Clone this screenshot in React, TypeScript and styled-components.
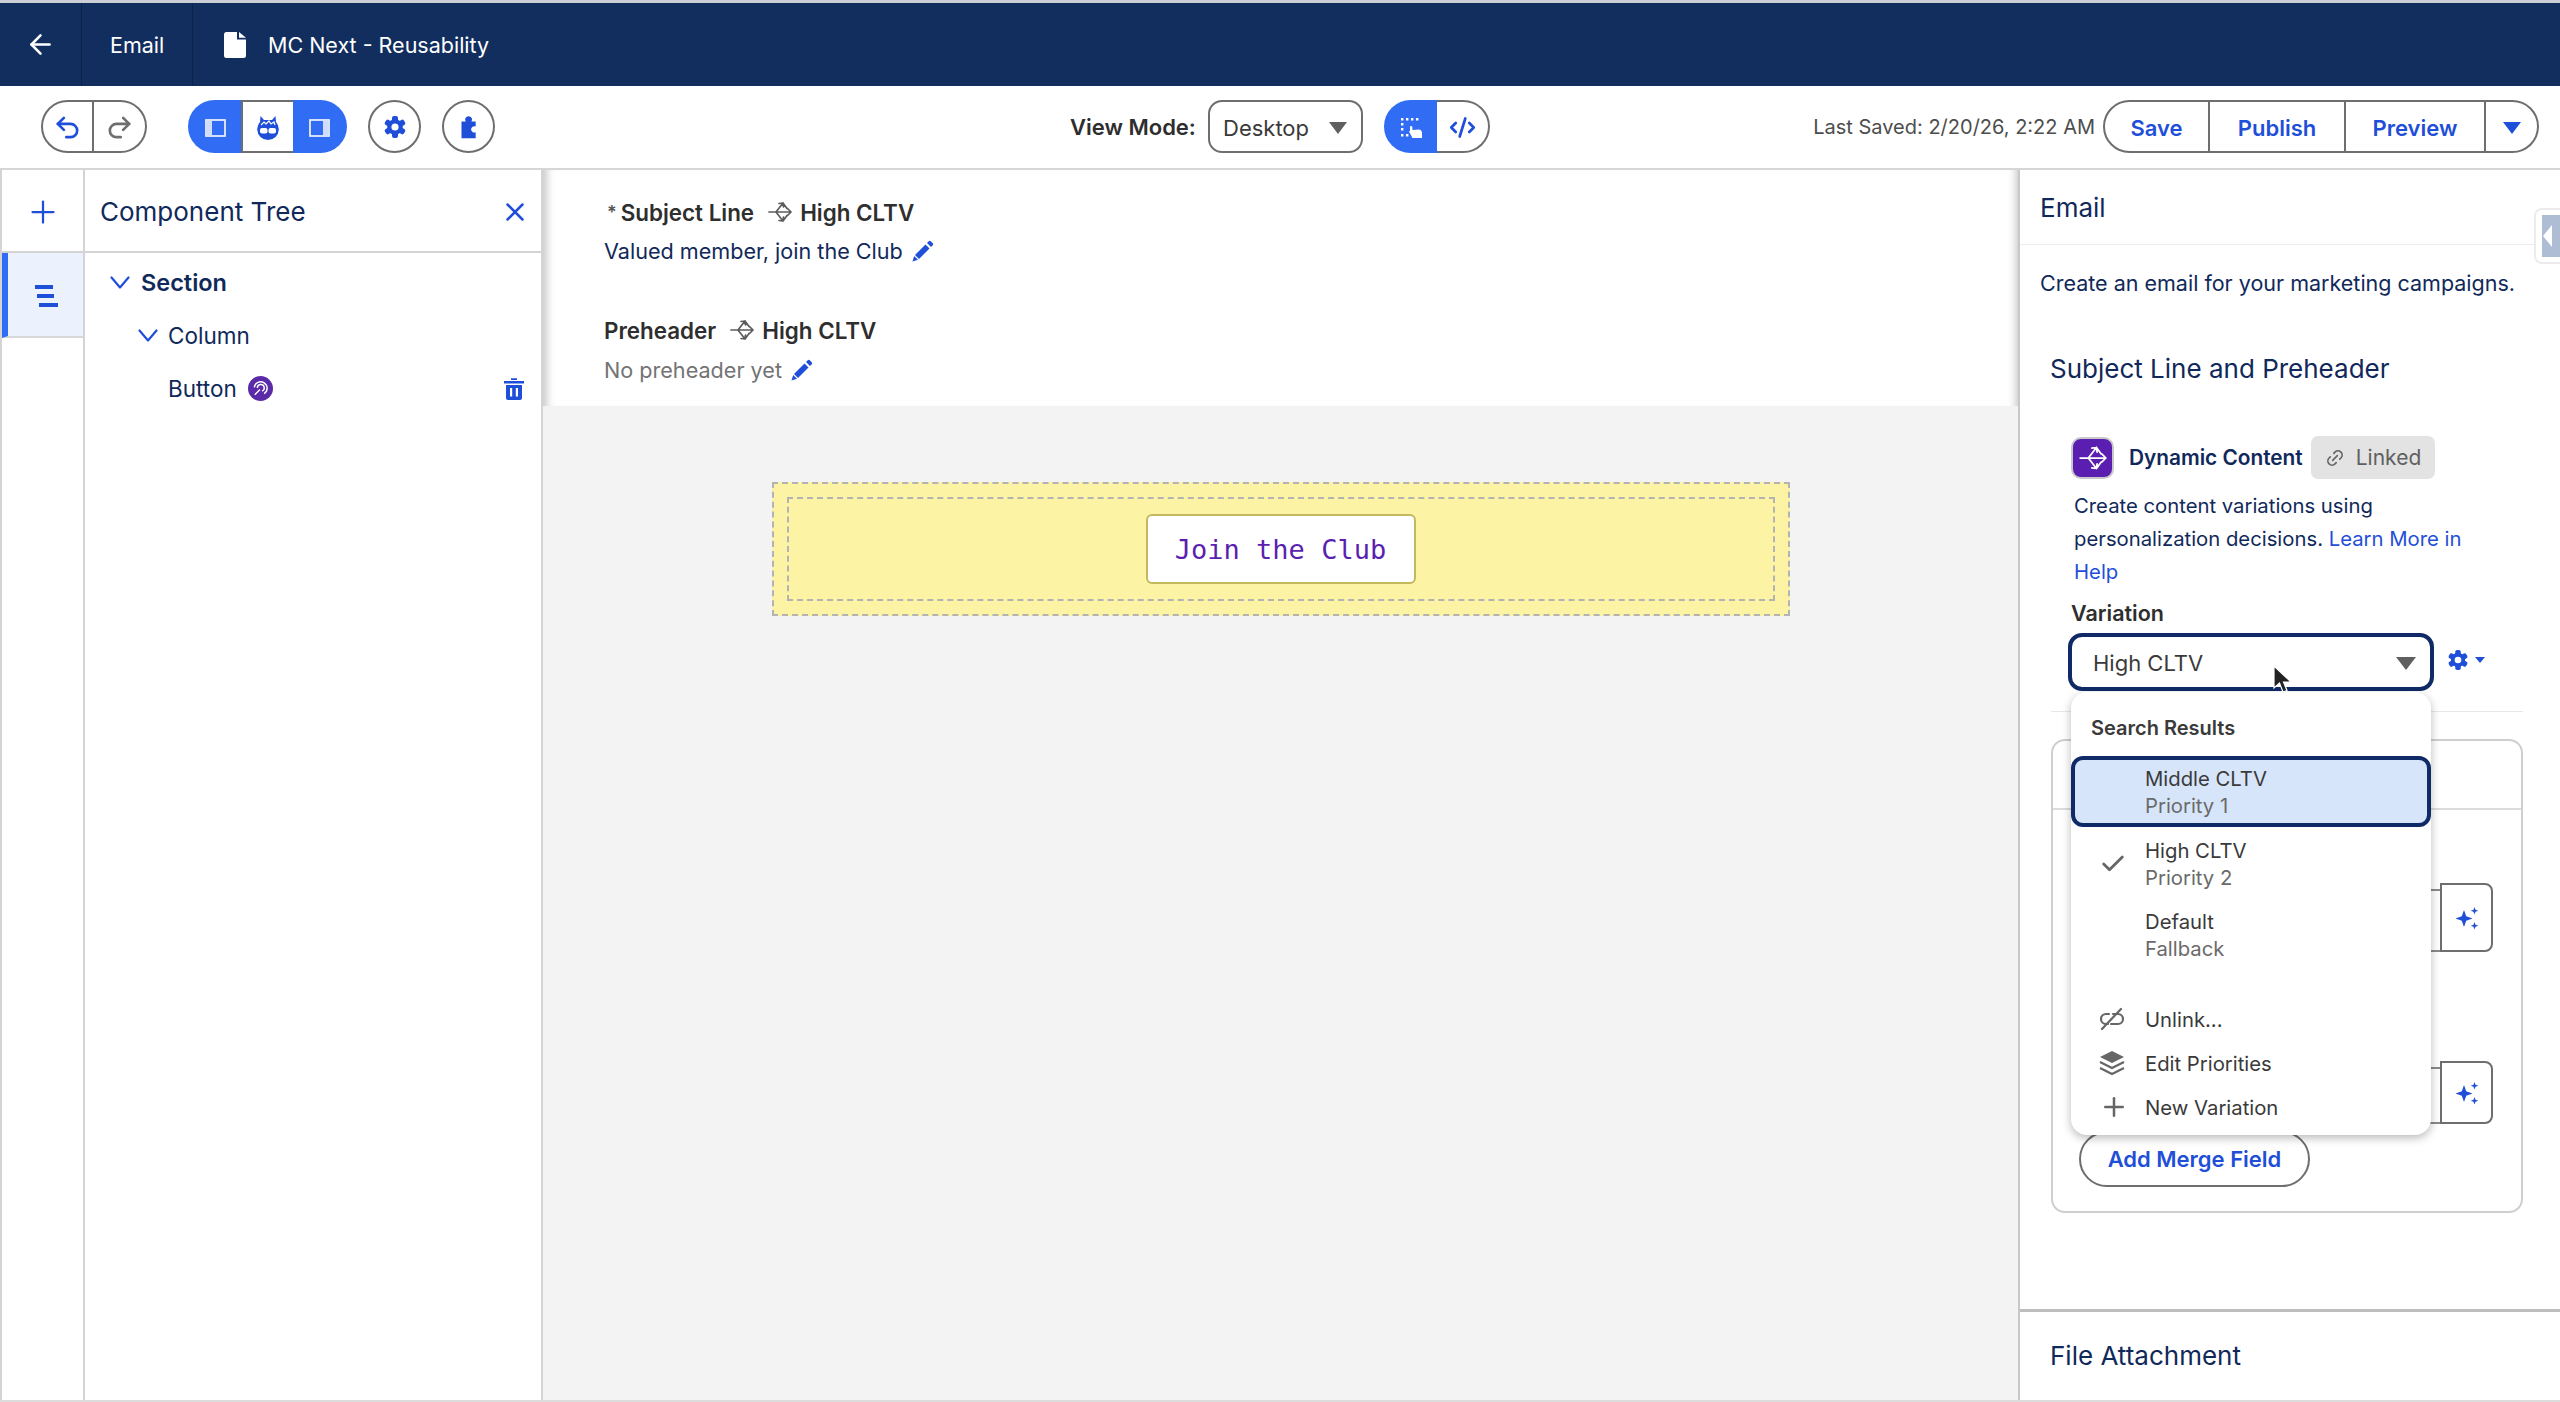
import React from "react";
import styled, { createGlobalStyle } from "styled-components";
import { ArrowLeft, Check, CodeXml, Link2, Plus, Redo2, Undo2, X } from "lucide-react";

const NAVY = "#112e5e";
const INK = "#10295a";
const BLUE = "#1f4fd8";
const FILL = "#316cf4";
const GRAY = "#6e6e6e";
const TEXT = "#2e2e2e";

const Global = createGlobalStyle`
  html, body { margin: 0; padding: 0; background: #fff; }
  body { font-family: Inter, "Noto Sans", "Liberation Sans", sans-serif; color: ${TEXT}; }
  * { box-sizing: border-box; }
`;

const Page = styled.div`
  width: 2560px; height: 1402px; overflow: hidden; display: flex; flex-direction: column;
  background: #fff; border-bottom: 2px solid #dcdcdc;
`;
const TopBar = styled.header`
  height: 86px; flex: none; display: flex; background: ${NAVY}; color: #fff;
  border-top: 3px solid #ccd0d6; font-size: 21.500px;
`;
const TopCell = styled.div<{ $w: number; $pad?: number }>`
  width: ${p => p.$w}px; display: flex; align-items: center; padding-left: ${p => p.$pad ?? 0}px;
  border-right: 1px solid #0b2349;
`;
const TopTitle = styled.div`
  display: flex; align-items: center; gap: 22px; padding-left: 31px;
`;
const Toolbar = styled.div`
  height: 84px; flex: none; display: grid; grid-template-columns: 1029px 420px 1fr;
  padding: 14px 21px 0 41px; border-bottom: 2px solid #d6d6d6;
`;
const Cluster = styled.div<{ $gap: number }>`
  display: flex; align-items: flex-start; gap: ${p => p.$gap}px;
`;
const Seg = styled.button<{ $w: number; $on?: boolean; $first?: boolean; $last?: boolean; $mid?: boolean }>`
  width: ${p => p.$w}px; height: 53px; padding: 2px 0 0; display: flex; align-items: center; justify-content: center;
  font: 600 22px Inter, sans-serif; color: ${BLUE};
  background: ${p => (p.$on ? FILL : "#fff")};
  border: 2px solid ${p => (p.$on ? FILL : GRAY)};
  border-left-width: ${p => (p.$first || p.$mid ? 2 : 0)}px;
  border-right-width: ${p => (p.$mid ? 0 : p.$last || !p.$on ? 2 : 0)}px;
  border-radius: ${p => (p.$first ? 27 : 0)}px ${p => (p.$last ? 27 : 0)}px ${p => (p.$last ? 27 : 0)}px ${p => (p.$first ? 27 : 0)}px;
`;
const Group = styled.div<{ $after?: number }>`
  display: flex; margin-right: ${p => p.$after ?? 0}px;
`;
const CircleButton = styled.button`
  width: 53px; height: 53px; padding: 0; border-radius: 50%; border: 2px solid ${GRAY}; background: #fff;
  display: flex; align-items: center; justify-content: center;
`;
const ViewLabel = styled.span`
  flex: none; width: 138px; white-space: nowrap; font-weight: 600; font-size: 22px; line-height: 55px; color: ${TEXT};
`;
const ViewSelect = styled.div`
  flex: none; width: 155px; height: 53px; border: 2px solid ${GRAY}; border-radius: 14px; display: flex; align-items: center;
  justify-content: space-between; padding: 2px 14px 0 13px; font-size: 22px; color: #3a3a3a; margin-right: 21px;
`;
const Caret = styled.i<{ $c?: string; $w?: number }>`
  display: block; width: 0; height: 0; flex: none;
  border-left: ${p => (p.$w ?? 18) / 2}px solid transparent;
  border-right: ${p => (p.$w ?? 18) / 2}px solid transparent;
  border-top: ${p => ((p.$w ?? 18) * 2) / 3}px solid ${p => p.$c ?? "#5f5f5f"};
`;
const RightTools = styled.div`
  justify-self: end; display: flex; align-items: flex-start;
`;
const Saved = styled.span`
  font-size: 20px; line-height: 55px; color: #4d4d4d; margin-right: 8px; white-space: nowrap;
`;
const Main = styled.main`
  flex: 1; min-height: 0; display: flex;
`;
const Rail = styled.nav`
  width: 85px; flex: none; border-left: 2px solid #d4d4d4; border-right: 2px solid #d4d4d4;
`;
const RailTop = styled.div`
  height: 83px; display: flex; align-items: center; justify-content: center; border-bottom: 2px solid #d4d4d4;
  padding-top: 2px;
`;
const RailItem = styled.div`
  height: 85px; background: #ecf2fd; border-left: 6px solid ${FILL}; border-bottom: 2px solid #d8d8d8;
  display: flex; align-items: center; justify-content: center; padding-top: 2px;
`;
const Tree = styled.aside`
  width: 458px; flex: none; border-right: 2px solid #d4d4d4;
`;
const TreeHead = styled.div`
  height: 83px; display: flex; align-items: center; justify-content: space-between; padding: 2px 11px 0 15px;
  border-bottom: 2px solid #d4d4d4; font-size: 26px; color: ${INK};
`;
const TreeRows = styled.div`
  padding-top: 3px;
`;
const TreeRow = styled.div<{ $in: number; $head?: boolean; $gap?: number }>`
  height: 53px; display: flex; align-items: center; padding: 0 17px 0 ${p => p.$in}px; gap: ${p => p.$gap ?? 11}px;
  font-size: ${p => (p.$head ? 23.500 : 22.500)}px; font-weight: ${p => (p.$head ? 600 : 400)}; color: ${INK};
`;
const Trash = styled.span`
  margin-left: auto; display: flex;
`;
const Center = styled.section`
  flex: 1; min-width: 0; background: #f3f3f3; display: flex; flex-direction: column; align-items: center;
`;
const Subject = styled.div`
  align-self: stretch; height: 236px; background: #fff; padding: 26px 0 0 61px;
  box-shadow: inset 12px 0 8px -8px #c9c9c9, inset -10px 0 8px -8px #c4c4c4;
`;
const FieldHead = styled.div<{ $gapTop?: number }>`
  display: flex; align-items: center; height: 32px; font-weight: 600; font-size: 22.400px; color: ${TEXT};
  margin-top: ${p => p.$gapTop ?? 0}px;
`;
const BranchSlot = styled.span`
  display: flex; margin: 0 8px 0 14px;
`;
const Star = styled.span`
  font-size: 18px; color: #555; margin: 0 4px 0 3px;
`;
const FieldValue = styled.div<{ $muted?: boolean; $top: number }>`
  display: flex; align-items: center; gap: 8px; height: 30px; margin-top: ${p => p.$top}px; font-size: 21.600px;
  color: ${p => (p.$muted ? "#737373" : INK)};
`;
const Section = styled.div`
  width: 1018px; height: 134px; margin-top: 76px; background: #fdf3a5; border: 2px dashed #b3b3b3; padding: 13px;
`;
const Column = styled.div`
  height: 104px; border: 2px dashed #b3b3b3; display: flex; align-items: center; justify-content: center;
`;
const CanvasButton = styled.div`
  width: 270px; height: 70px; background: #fff; border: 2px solid #c2b95e; border-radius: 6px; display: flex;
  align-items: center; justify-content: center; font: 27px "DejaVu Sans Mono", monospace; color: #5a1fb0;
`;
const Inspector = styled.aside`
  position: relative; width: 542px; flex: none; border-left: 2px solid #c8c8c8; overflow: hidden;
`;
const InspectorHead = styled.div`
  height: 75px; display: flex; align-items: center; padding-left: 20px; border-bottom: 1px solid #ececec;
  font-size: 26px; color: ${INK};
`;
const Collapse = styled.div`
  position: absolute; right: 0; top: 38px; width: 26px; height: 56px; background: #fff; border: 2px solid #ececec;
  border-right: 0; border-radius: 8px 0 0 8px; padding: 5px 0 5px 6px; display: flex;
`;
const CollapseInner = styled.div`
  flex: 1; background: #aebcd4; display: flex; align-items: center;
`;
const Lead = styled.p`
  margin: 23px 0 0 20px; font-size: 21.500px; line-height: 30px; color: ${INK}; white-space: nowrap;
`;
const Heading = styled.h2<{ $top: number }>`
  margin: ${p => p.$top}px 0 0 30px; font-weight: 400; font-size: 26px; line-height: 32px; color: ${INK};
`;
const DynRow = styled.div`
  margin: 51px 0 0 51px; display: flex; align-items: center; height: 43px;
`;
const DynIcon = styled.div`
  width: 43px; height: 42px; border-radius: 10px; background: #5a1fb0; border: 2px solid #c9c9c9;
  display: flex; align-items: center; justify-content: center; margin-right: 15px;
`;
const DynTitle = styled.span`
  width: 182px; font-weight: 600; font-size: 20.800px; color: ${INK}; white-space: nowrap;
`;
const Pill = styled.span`
  width: 124px; height: 43px; border-radius: 7px; background: #e3e3e3; color: #606060; font-size: 21px;
  display: flex; align-items: center; justify-content: center; gap: 11px;
`;
const Para = styled.p`
  margin: 10px 0 0 54px; font-size: 20.300px; line-height: 33px; color: ${INK}; white-space: nowrap;
`;
const HelpLink = styled.a`
  color: ${BLUE};
`;
const FieldLabel = styled.div`
  margin: 11px 0 0 51px; font-weight: 600; font-size: 21.500px; line-height: 28px; color: ${TEXT};
`;
const SelectRow = styled.div`
  position: relative; margin: 6px 0 0 48px; display: flex; align-items: center;
`;
const SelectBox = styled.div`
  width: 366px; height: 58px; border: 4px solid #0f2a66; border-radius: 14px; background: #fff; display: flex;
  align-items: center; justify-content: space-between; padding: 2px 14px 0 21px; font-size: 22px; color: #3a3a3a;
`;
const GearMenu = styled.div`
  display: flex; align-items: center; gap: 6px; margin: -4px 0 0 13px;
`;
const Cursor = styled.svg`
  position: absolute; left: 204px; top: 32px; z-index: 3;
`;
const Rule = styled.div`
  margin: 20px 37px 0 31px; border-top: 1px solid #e8e8e8;
`;
const Card = styled.div`
  margin: 27px 37px 0 31px; height: 474px; border: 2px solid #cfcfcf; border-radius: 14px; padding-top: 67px;
`;
const CardRule = styled.div`
  border-top: 2px solid #dcdcdc;
`;
const InputRow = styled.div<{ $top: number; $h: number }>`
  margin-top: ${p => p.$top}px; height: ${p => p.$h}px; display: flex; align-items: flex-end; padding-left: 27px;
`;
const FakeInput = styled.div<{ $h: number }>`
  width: 360px; height: ${p => p.$h}px; border: 2px solid #8a8a8a; border-right: 0; border-radius: 6px 0 0 6px;
`;
const AiButton = styled.button`
  width: 53px; height: 100%; padding: 0; background: #fff; border: 2px solid ${GRAY}; border-radius: 0 8px 8px 0;
  display: flex; align-items: center; justify-content: center;
`;
const MergeButton = styled.button`
  display: block; margin: 7px 0 0 26px; width: 231px; height: 56px; border-radius: 28px; background: #fff;
  border: 2px solid ${GRAY}; font: 600 22px Inter, sans-serif; color: ${BLUE}; padding: 0;
`;
const BottomRule = styled.div`
  margin-top: 96px; border-top: 3px solid #bdbdbd;
`;
const Menu = styled.div`
  position: absolute; left: 51px; top: 522px; width: 360px; height: 443px; background: #fff; border-radius: 16px;
  box-shadow: 0 3px 10px rgba(0,0,0,.28); z-index: 2; padding-top: 36px;
`;
const MenuTitle = styled.div`
  font-weight: 600; font-size: 20px; line-height: 28px; color: #3a3a3a; padding-left: 20px; margin-top: -14px;
`;
const Option = styled.div<{ $on?: boolean }>`
  height: 71px; margin-top: ${p => (p.$on ? 14 : 0)}px; margin-bottom: ${p => (p.$on ? 1 : 0)}px;
  display: flex; align-items: center; border-radius: 12px;
  background: ${p => (p.$on ? "#d7e5fb" : "#fff")};
  border: ${p => (p.$on ? "4px solid #0f2a66" : "0")};
  padding-left: ${p => (p.$on ? 24 : 28)}px;
`;
const OptionIcon = styled.span`
  width: 46px; flex: none; display: flex;
`;
const OptionText = styled.div`
  font-size: 20.300px; line-height: 27px; color: #3a3a3a;
`;
const OptionSub = styled.div`
  color: #6a6a6a;
`;
const Actions = styled.div`
  margin-top: 27px;
`;
const Action = styled.div`
  height: 44px; display: flex; align-items: center; padding-left: 28px; font-size: 20.300px; color: #3a3a3a;
`;

const Chevron = () => (
  <svg width="20" height="13" viewBox="0 0 20 13" fill="none" stroke={BLUE} strokeWidth="2.200" strokeLinecap="round" strokeLinejoin="round">
    <path d="M1.500 1.500L10 11.500l8.500-10" />
  </svg>
);
const Gear = ({ s = 24, c = BLUE }: { s?: number; c?: string }) => (
  <svg width={s} height={s} viewBox="0 0 24 24">
    {[0, 60, 120].map(a => (
      <rect key={a} x="9" y="1" width="6" height="22" rx="2" fill={c} transform={`rotate(${a} 12 12)`} />
    ))}
    <circle cx="12" cy="12" r="7.800" fill={c} />
    <circle cx="12" cy="12" r="3.600" fill="#fff" />
  </svg>
);
const Branch = ({ s = 24, c = "#5c5c5c", w = 1.700 }: { s?: number; c?: string; w?: number }) => (
  <svg width={s} height={s} viewBox="0 0 24 24" fill="none" stroke={c} strokeWidth={w} strokeLinecap="round" strokeLinejoin="round">
    <path d="M1 12h7L15 3 M8 12l7 9 M15 3l-4 .5 M15 3l.5 4 M15 21l-4-.5 M15 21l.5-4 M8 12h15 M19.500 8.500L23 12l-3.500 3.500 M15 3l4 5.500 M15 21l4-5.500" />
  </svg>
);
const Pencil = () => (
  <svg width="24" height="24" viewBox="0 0 24 24" fill={BLUE}>
    <path d="M14.500 5.500l4 4L8 20l-4-4z" />
    <path d="M16 4l1.700-1.700a1.500 1.500 0 0 1 2.100 0l1.900 1.900a1.500 1.500 0 0 1 0 2.100L20 8z" />
    <path d="M3.200 17l3.800 3.800L1.500 22.500z" />
  </svg>
);
const Sparkle = () => (
  <svg width="24" height="24" viewBox="0 0 24 24" fill={BLUE}>
    <path d="M9 4l2.200 6.300 6.300 2.200-6.300 2.200L9 21l-2.200-6.300L.5 12.500l6.300-2.200z" />
    <path d="M19.500 1l1 2.800 2.800 1-2.800 1-1 2.800-1-2.800-2.800-1 2.800-1z" />
    <path d="M19.500 16l1 2.800 2.800 1-2.800 1-1 2.800-1-2.800-2.800-1 2.800-1z" />
  </svg>
);
const PanelIcon = ({ side }: { side: "l" | "r" }) => (
  <svg width="21" height="18" viewBox="0 0 21 18">
    <rect x="1" y="1" width="19" height="16" fill="none" stroke="#e6edfd" strokeWidth="1.800" />
    <rect x={side === "l" ? 2 : 14} y="2" width="5" height="14" fill="#cfdcfb" />
  </svg>
);

export default function App() {
  return (
    <Page>
      <Global />
      <TopBar>
        <TopCell $w={82} $pad={25}><ArrowLeft size={31} color="#fff" strokeWidth={2} /></TopCell>
        <TopCell $w={111} $pad={28}>Email</TopCell>
        <TopTitle>
          <svg width="22" height="26" viewBox="0 0 22 26" fill="#fff">
            <path d="M2.500 0H13v7.500h9V23.500a2.500 2.500 0 0 1-2.500 2.500h-17A2.500 2.500 0 0 1 0 23.500v-21A2.500 2.500 0 0 1 2.500 0z M15 0l7 5.700h-7z" />
          </svg>
          MC Next - Reusability
        </TopTitle>
      </TopBar>
      <Toolbar>
        <Cluster $gap={21}>
          <Group $after={20}>
            <Seg $w={53} $first><Undo2 size={29} color={BLUE} strokeWidth={2.200} /></Seg>
            <Seg $w={53} $last><Redo2 size={29} color={GRAY} strokeWidth={2.200} /></Seg>
          </Group>
          <Group>
            <Seg $w={53} $on $first><PanelIcon side="l" /></Seg>
            <Seg $w={52} $mid>
              <svg width="24" height="26" viewBox="0 0 24 26">
                <path d="M4.500 1l3.500 4h8l3.500-4 .5 6a10.800 10.800 0 1 1-16 0z" fill={BLUE} />
                <rect x="4" y="13" width="7.500" height="5.500" rx="2" fill="#fff" />
                <rect x="12.500" y="13" width="7.500" height="5.500" rx="2" fill="#fff" />
                <path d="M5 10l3-3 2 2 3-3 2 3 3-2 1 3" stroke="#fff" strokeWidth="1.200" fill="none" />
              </svg>
            </Seg>
            <Seg $w={54} $on $last><PanelIcon side="r" /></Seg>
          </Group>
          <CircleButton><Gear /></CircleButton>
          <CircleButton>
            <svg width="18" height="25" viewBox="0 0 20 30" fill={BLUE}>
              <path d="M1 9h5.200a4 4 0 1 1 6.600 0H18v6a3.800 3.800 0 1 0 0 6.800V29H1z" />
            </svg>
          </CircleButton>
        </Cluster>
        <Cluster $gap={0}>
          <ViewLabel>View Mode:</ViewLabel>
          <ViewSelect>Desktop<Caret /></ViewSelect>
          <Group>
            <Seg $w={53} $on $first>
              <svg width="24" height="24" viewBox="0 0 24 24" fill="#fff">
                <path d="M1 2h2.400v2.400H1zM6 2h2.400v2.400H6zM11 2h2.400v2.400H11zM16 2h2.400v2.400H16zM1 7h2.400v2.400H1zM1 12h2.400v2.400H1zM1 18h2.400v2.400H1zM6 18h2.400v2.400H6z" />
                <path d="M11 10c1 0 1.400.6 1.400 1.500V14l6-.5c2.500 0 3.600 1.300 3.600 3.500v5H12.500L9 15.500l1-.8V11.500c0-1 .3-1.500 1-1.500z" />
              </svg>
            </Seg>
            <Seg $w={53} $last><CodeXml size={27} color={BLUE} strokeWidth={2.400} /></Seg>
          </Group>
        </Cluster>
        <RightTools>
          <Saved>Last Saved: 2/20/26, 2:22 AM</Saved>
          <Group>
            <Seg $w={107} $first>Save</Seg>
            <Seg $w={136}>Publish</Seg>
            <Seg $w={140}>Preview</Seg>
            <Seg $w={53} $last><Caret $c={BLUE} /></Seg>
          </Group>
        </RightTools>
      </Toolbar>
      <Main>
        <Rail>
          <RailTop><Plus size={36} color={BLUE} strokeWidth={1.500} /></RailTop>
          <RailItem>
            <svg width="24" height="24" viewBox="0 0 24 24" fill={BLUE}>
              <path d="M1 1h18v4H1zM3 10h17v4H3zM5 19h19v4H5z" />
            </svg>
          </RailItem>
        </Rail>
        <Tree>
          <TreeHead>Component Tree<X size={30} color={BLUE} strokeWidth={2} /></TreeHead>
          <TreeRows>
            <TreeRow $in={25} $head><Chevron />Section</TreeRow>
            <TreeRow $in={53} $gap={10}><Chevron />Column</TreeRow>
            <TreeRow $in={83}>
              Button
              <svg width="25" height="25" viewBox="0 0 24 24">
                <circle cx="12" cy="12" r="12" fill="#5a2aa8" />
                <g fill="none" stroke="#fff" strokeWidth="1.400">
                  <path d="M6 11a6.200 6.200 0 1 1 9.500 6" />
                  <path d="M9 11.500a3.300 3.300 0 1 1 4.500 3" />
                  <path d="M6.500 18l5-5" />
                </g>
              </svg>
              <Trash>
                <svg width="20" height="23" viewBox="0 0 20 23" fill={BLUE}>
                  <path d="M0 4h20v2.500H0zM7 1.200h6V3H7z" />
                  <path d="M2 8h16v13a2 2 0 0 1-2 2H4a2 2 0 0 1-2-2zM6 11v8.500h2.200V11zM11.800 11v8.500H14V11z" fillRule="evenodd" />
                </svg>
              </Trash>
            </TreeRow>
          </TreeRows>
        </Tree>
        <Center>
          <Subject>
            <FieldHead><Star>*</Star>Subject Line<BranchSlot><Branch /></BranchSlot>High CLTV</FieldHead>
            <FieldValue $top={8}>Valued member, join the Club<Pencil /></FieldValue>
            <FieldHead $gapTop={48}>Preheader<BranchSlot><Branch /></BranchSlot>High CLTV</FieldHead>
            <FieldValue $muted $top={9}>No preheader yet<Pencil /></FieldValue>
          </Subject>
          <Section>
            <Column><CanvasButton>Join the Club</CanvasButton></Column>
          </Section>
        </Center>
        <Inspector>
          <InspectorHead>Email</InspectorHead>
          <Collapse>
            <CollapseInner>
              <svg width="12" height="24" viewBox="0 0 12 24"><path d="M10 1v22L1 12z" fill="#fff" /></svg>
            </CollapseInner>
          </Collapse>
          <Lead>Create an email for your marketing campaigns.</Lead>
          <Heading $top={55}>Subject Line and Preheader</Heading>
          <DynRow>
            <DynIcon><Branch s={28} c="#fff" w={1.500} /></DynIcon>
            <DynTitle>Dynamic Content</DynTitle>
            <Pill><Link2 size={20} color="#666" strokeWidth={2} style={{ transform: "rotate(-45deg)" }} />Linked</Pill>
          </DynRow>
          <Para>
            Create content variations using<br />
            personalization decisions. <HelpLink>Learn More in</HelpLink><br />
            <HelpLink>Help</HelpLink>
          </Para>
          <FieldLabel>Variation</FieldLabel>
          <SelectRow>
            <SelectBox>High CLTV<Caret $w={20} /></SelectBox>
            <GearMenu><Gear s={22} /><Caret $c={BLUE} $w={10} /></GearMenu>
            <Cursor width="22" height="30" viewBox="0 0 22 30">
              <path d="M2 1v22l5.500-5 3.500 9 4-1.500-3.500-8.500H19z" fill="#222" stroke="#fff" strokeWidth="1.200" />
            </Cursor>
          </SelectRow>
          <Rule />
          <Card>
            <CardRule />
            <InputRow $top={73} $h={69}><FakeInput $h={63} /><AiButton><Sparkle /></AiButton></InputRow>
            <InputRow $top={109} $h={63}><FakeInput $h={57} /><AiButton><Sparkle /></AiButton></InputRow>
            <MergeButton>Add Merge Field</MergeButton>
          </Card>
          <BottomRule />
          <Heading $top={28}>File Attachment</Heading>
          <Menu>
            <MenuTitle>Search Results</MenuTitle>
            <Option $on>
              <OptionIcon />
              <OptionText>Middle CLTV<OptionSub>Priority 1</OptionSub></OptionText>
            </Option>
            <Option>
              <OptionIcon><Check size={28} color="#666" strokeWidth={2.400} /></OptionIcon>
              <OptionText>High CLTV<OptionSub>Priority 2</OptionSub></OptionText>
            </Option>
            <Option>
              <OptionIcon />
              <OptionText>Default<OptionSub>Fallback</OptionSub></OptionText>
            </Option>
            <Actions>
              <Action>
                <OptionIcon>
                  <svg width="26" height="24" viewBox="0 0 26 24" fill="none" stroke="#666" strokeWidth="2.200" strokeLinecap="round">
                    <path d="M10 7H7a5 5 0 0 0 0 10h2 M14 7h5a5 5 0 0 1 0 10h-7 M3 22L22 2" />
                  </svg>
                </OptionIcon>
                Unlink...
              </Action>
              <Action>
                <OptionIcon>
                  <svg width="26" height="26" viewBox="0 0 26 26" fill="#666">
                    <path d="M13 1l12 6-12 6L1 7z" />
                    <path d="M1 12l12 6 12-6M1 18l12 6 12-6" fill="none" stroke="#666" strokeWidth="2.200" />
                  </svg>
                </OptionIcon>
                Edit Priorities
              </Action>
              <Action>
                <OptionIcon><Plus size={30} color="#666" strokeWidth={2} /></OptionIcon>
                New Variation
              </Action>
            </Actions>
          </Menu>
        </Inspector>
      </Main>
    </Page>
  );
}
